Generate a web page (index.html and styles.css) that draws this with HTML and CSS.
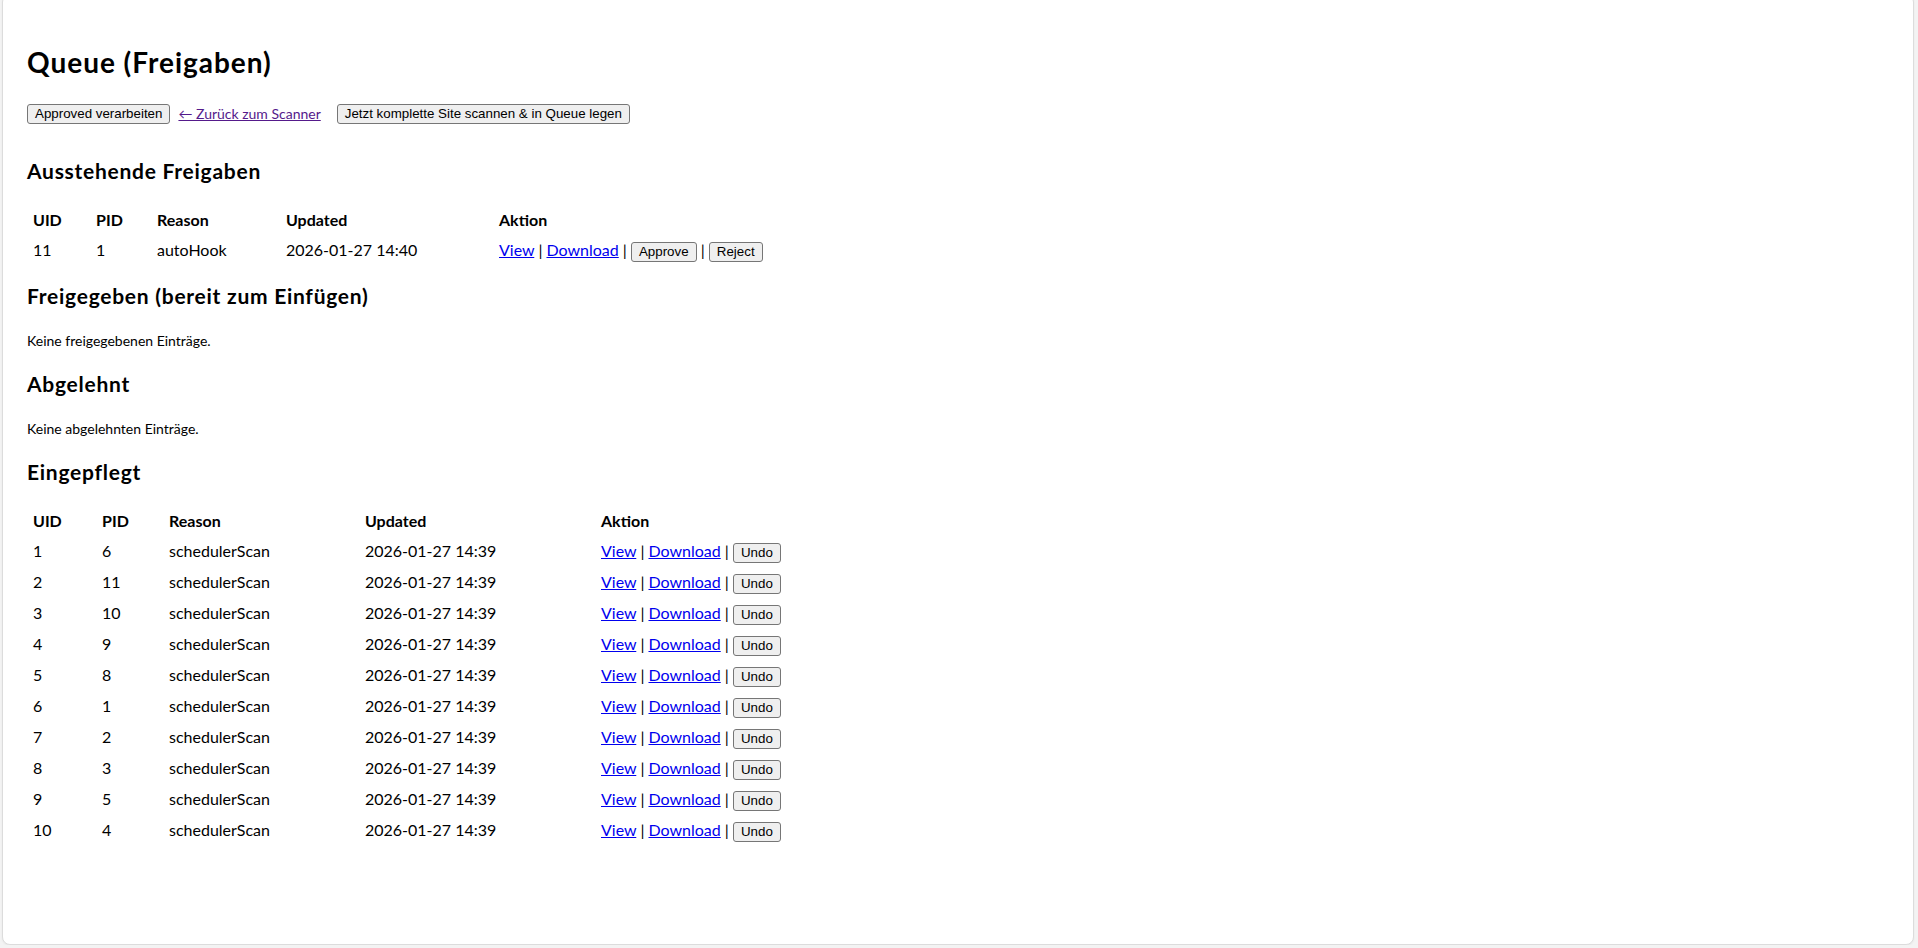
FILE: index.html
```html
<!DOCTYPE html>
<html lang="de">
<head>
<meta charset="utf-8">
<title>Queue (Freigaben)</title>
<link rel="stylesheet" href="styles.css">
</head>
<body>
<div class="card">
  <h1 class="title">Queue (Freigaben)</h1>
  <div class="toolbar">
    <button class="btn" type="button">Approved verarbeiten</button>
    <a class="back-link" href="#">← Zurück zum Scanner</a>
    <button class="btn btn-scan" type="button">Jetzt komplette Site scannen &amp; in Queue legen</button>
  </div>

  <h2 class="section-title">Ausstehende Freigaben</h2>
  <table class="queue-table pending">
    <thead>
      <tr><th class="c-uid">UID</th><th class="c-pid">PID</th><th class="c-reason">Reason</th><th class="c-updated">Updated</th><th>Aktion</th></tr>
    </thead>
    <tbody>
      <tr><td>11</td><td>1</td><td>autoHook</td><td>2026-01-27 14:40</td><td><a href="#">View</a> | <a href="#">Download</a> | <button class="btn" type="button">Approve</button> | <button class="btn" type="button">Reject</button></td></tr>
    </tbody>
  </table>

  <h2 class="section-title">Freigegeben (bereit zum Einfügen)</h2>
  <p class="empty">Keine freigegebenen Einträge.</p>

  <h2 class="section-title">Abgelehnt</h2>
  <p class="empty">Keine abgelehnten Einträge.</p>

  <h2 class="section-title">Eingepflegt</h2>
  <table class="queue-table done">
    <thead>
      <tr><th class="c-uid">UID</th><th class="c-pid">PID</th><th class="c-reason">Reason</th><th class="c-updated">Updated</th><th>Aktion</th></tr>
    </thead>
    <tbody>
      <tr><td>1</td><td>6</td><td>schedulerScan</td><td>2026-01-27 14:39</td><td><a href="#">View</a> | <a href="#">Download</a> | <button class="btn" type="button">Undo</button></td></tr>
      <tr><td>2</td><td>11</td><td>schedulerScan</td><td>2026-01-27 14:39</td><td><a href="#">View</a> | <a href="#">Download</a> | <button class="btn" type="button">Undo</button></td></tr>
      <tr><td>3</td><td>10</td><td>schedulerScan</td><td>2026-01-27 14:39</td><td><a href="#">View</a> | <a href="#">Download</a> | <button class="btn" type="button">Undo</button></td></tr>
      <tr><td>4</td><td>9</td><td>schedulerScan</td><td>2026-01-27 14:39</td><td><a href="#">View</a> | <a href="#">Download</a> | <button class="btn" type="button">Undo</button></td></tr>
      <tr><td>5</td><td>8</td><td>schedulerScan</td><td>2026-01-27 14:39</td><td><a href="#">View</a> | <a href="#">Download</a> | <button class="btn" type="button">Undo</button></td></tr>
      <tr><td>6</td><td>1</td><td>schedulerScan</td><td>2026-01-27 14:39</td><td><a href="#">View</a> | <a href="#">Download</a> | <button class="btn" type="button">Undo</button></td></tr>
      <tr><td>7</td><td>2</td><td>schedulerScan</td><td>2026-01-27 14:39</td><td><a href="#">View</a> | <a href="#">Download</a> | <button class="btn" type="button">Undo</button></td></tr>
      <tr><td>8</td><td>3</td><td>schedulerScan</td><td>2026-01-27 14:39</td><td><a href="#">View</a> | <a href="#">Download</a> | <button class="btn" type="button">Undo</button></td></tr>
      <tr><td>9</td><td>5</td><td>schedulerScan</td><td>2026-01-27 14:39</td><td><a href="#">View</a> | <a href="#">Download</a> | <button class="btn" type="button">Undo</button></td></tr>
      <tr><td>10</td><td>4</td><td>schedulerScan</td><td>2026-01-27 14:39</td><td><a href="#">View</a> | <a href="#">Download</a> | <button class="btn" type="button">Undo</button></td></tr>
    </tbody>
  </table>
</div>
</body>
</html>
```

FILE: styles.css
```css
html, body {
  margin: 0;
  padding: 0;
}

body {
  background: #f3f3f3;
  font-family: Lato, "Noto Sans", sans-serif;
  font-size: 14px;
  color: #000;
}

.card {
  box-sizing: border-box;
  height: 951px;
  margin: -6px 4px 0 2px;
  padding: 49px 24px 0;
  background: #fff;
  border: 1px solid #dcdcdc;
  border-radius: 8px;
  box-shadow: 0 1px 2px rgba(0, 0, 0, 0.05);
}

.title {
  margin: 0;
  font-size: 28px;
  line-height: 36px;
  font-weight: 700;
  letter-spacing: 0.035em;
}

.toolbar {
  display: flex;
  align-items: center;
  height: 20px;
  margin: 24px 0 33px;
}

.btn {
  box-sizing: border-box;
  height: 20px;
  padding: 0 7px;
  font-family: "Liberation Sans", Arial, sans-serif;
  font-size: 13.33px;
  line-height: 18px;
  color: #000;
  background: #efefef;
  border: 1px solid #767676;
  border-radius: 3px;
}

.back-link {
  margin-left: 8px;
  font-size: 14px;
  line-height: 20px;
  color: #551a8b;
  text-decoration: underline;
}

.btn-scan {
  margin-left: 16px;
}

.section-title {
  margin: 0 0 20px;
  font-size: 21px;
  line-height: 28px;
  font-weight: 700;
  letter-spacing: 0.035em;
}

.empty {
  margin: 21px 0 20px;
  font-size: 14px;
  line-height: 19px;
}

.queue-table {
  border-collapse: collapse;
  margin: 19px 0 17px;
  font-size: 16px;
}

.queue-table th {
  padding: 4px 6px;
  line-height: 21px;
  text-align: left;
  font-weight: 700;
}

.queue-table td {
  padding: 4px 6px;
  line-height: 23px;
  white-space: nowrap;
}

.queue-table td a {
  color: #0000ee;
  text-decoration: underline;
}

.queue-table td .btn {
  margin-bottom: -1px;
}

.pending .c-uid { width: 51px; }
.pending .c-pid { width: 49px; }
.pending .c-reason { width: 117px; }
.pending .c-updated { width: 201px; }

.done .c-uid { width: 57px; }
.done .c-pid { width: 55px; }
.done .c-reason { width: 184px; }
.done .c-updated { width: 224px; }
```
